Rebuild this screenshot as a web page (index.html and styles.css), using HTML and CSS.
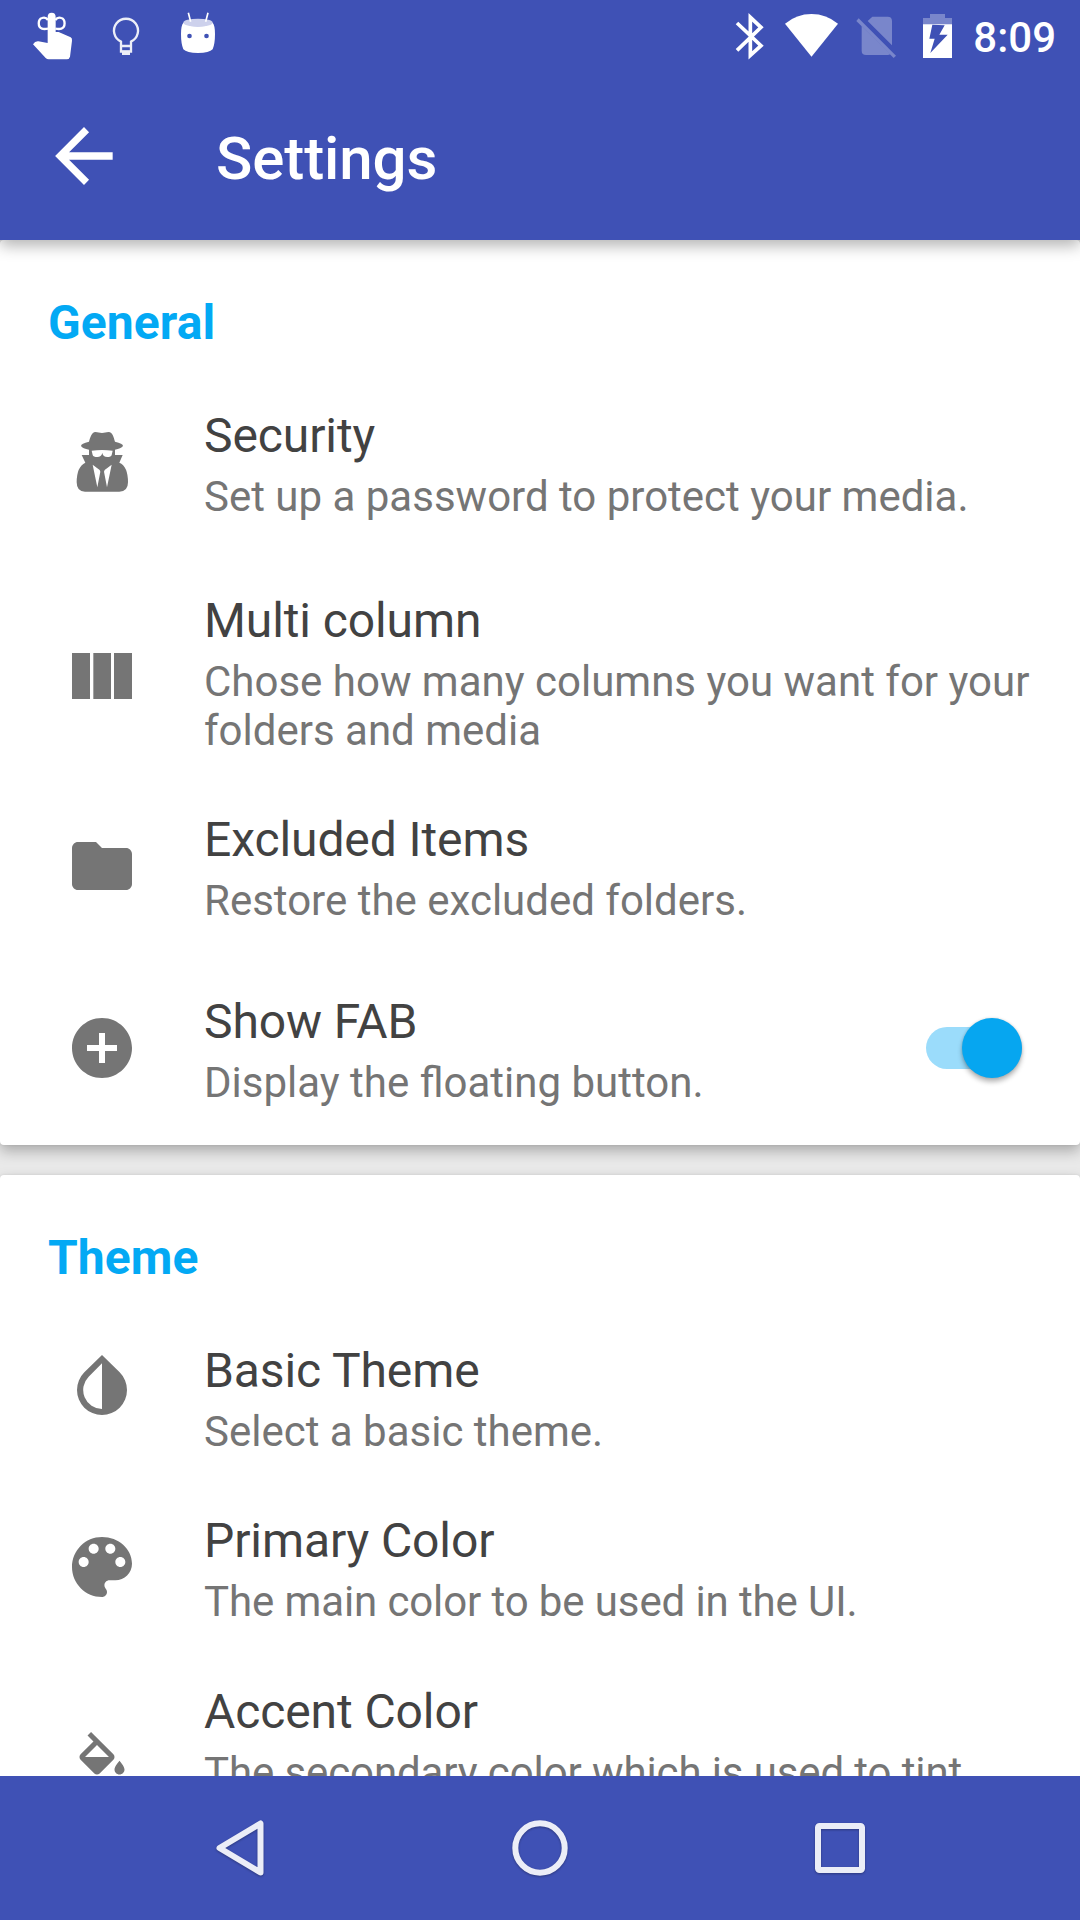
FILE: index.html
```html
<!DOCTYPE html>
<html lang="en">
<head>
<meta charset="utf-8">
<title>Settings</title>
<link rel="stylesheet" href="styles.css">
</head>
<body>
<div class="screen">
  <header class="app-header">
    <div class="status-bar">
      <div class="notifications">
        <svg width="42" height="72" viewBox="96 0 126 216" fill="#fff"><path d="M143 51q0-13 12-13t12 13v45h9l36 16q5 3 4 10l-6 48q-2 8-10 8h-54q-5 0-9-4L99 133q6-10 16-9l28 5z"/><g fill="none" stroke="#fff" stroke-width="7"><path d="M144 60c-4-6-12-8-18-6-13 4-13 28 0 32 6 2 12 1 18 0M166 60c4-6 12-8 18-6 13 4 13 28 0 32-6 2-12 1-18 0"/></g></svg>
        <svg width="32" height="72" viewBox="333 0 96 216"><g opacity=".9"><path d="M363 158v-33a36 36 0 1 1 30 0v33M363 138h30M363 154h30" fill="none" stroke="#fff" stroke-width="7"/><path d="M366 152h24v13h-24z" fill="#fff"/></g></svg>
        <svg width="36" height="72" viewBox="540 0 108 216"><path d="M550 68q44 22 88 0 7 8 7 34 0 29-7 46-10 11-44 11t-44-11q-7-17-7-46 0-26 7-34z" fill="#fff"/><ellipse cx="594" cy="68" rx="44" ry="12" fill="#cdd1ec"/><path d="M565 38l7 27M624 38l-7 27" stroke="#fff" stroke-width="5"/><circle cx="568.500" cy="108" r="7" fill="#3f51b5"/><circle cx="619.500" cy="108" r="7" fill="#3f51b5"/></svg>
      </div>
      <div class="indicators">
        <svg width="29" height="72" viewBox="45 0 87 216"><path d="M51 69l72 68-32 29V52l32 30-72 69" fill="none" stroke="#fff" stroke-width="11"/></svg>
        <svg width="55" height="72" viewBox="192 0 165 216"><path d="M195 71q35-29 79.500-29T354 71l-79.500 99z" fill="#fff"/></svg>
        <svg width="41" height="72" viewBox="408 0 123 216" fill="#7986cb"><path d="M457 50h46q13 0 13 13v73l-73-73zM425 78l86 84q-3 3-8 3h-65q-13 0-13-13z"/><path d="M409 63l7-8 112 112-7 7z"/></svg>
        <svg width="31" height="72" viewBox="606 0 93 216"><path d="M630 42h45v12h21v20h-87V54h21z" fill="#7986cb"/><path d="M609 73h87v101h-87zM637 74l-9 42h16l-13 43 52-55h-25l16-28z" fill="#fff" fill-rule="evenodd"/></svg>
        <span class="clock">8:09</span>
      </div>
    </div>
    <div class="toolbar">
      <svg class="back" width="86" height="86" viewBox="0 0 24 24" fill="#fff"><path d="M20 10.940H7.830l5.590-5.590L12 3.940 3.940 12 12 20.060l1.410-1.410L7.830 13.060H20z"/></svg>
      <h1 class="toolbar-title">Settings</h1>
    </div>
  </header>

  <main class="content">
    <section class="card general">
      <h2 class="card-title">General</h2>
      <div class="row">
        <svg class="icon icon-security" viewBox="78 438 216 216"><path d="M186 459c8 0 12-3 20-3 12 0 15 16 19 29q24 5 24 13-6 8-24 11v16h23l-10 23q26 11 26 59 0 28-26 28h-103q-25 0-25-28 0-47 26-59l-11-23h22v-16q-19-3-24-11 0-8 24-13c4-13 8-29 19-29 8 0 12 3 20 3z"/><path fill="#fff" d="M155 512q31-4 63 0l-3 13q-2 6-13 6-13 0-15-12-3 12-15 12-12 0-14-6zM158 554l21 16 2 5-9 47q-7-34-14-68zM215 554l-21 16-2 5 9 47q7-34 14-68z"/></svg>
        <div class="text"><div class="title">Security</div><div class="summary">Set up a password to protect your media.</div></div>
      </div>
      <div class="row row-columns">
        <svg class="icon icon-columns" viewBox="78 180 216 216"><path d="M96 219h54v138H96zM160 219h53v138h-53zM222 219h54v138h-54z"/></svg>
        <div class="text"><div class="title">Multi column</div><div class="summary">Chose how many columns you want for your folders and media</div></div>
      </div>
      <div class="row row-excluded">
        <svg class="icon icon-folder" viewBox="0 0 24 24"><path d="M10 4H4c-1.100 0-1.990.9-1.990 2L2 18c0 1.100.9 2 2 2h16c1.100 0 2-.9 2-2V8c0-1.100-.9-2-2-2h-8l-2-2z"/></svg>
        <div class="text"><div class="title">Excluded Items</div><div class="summary">Restore the excluded folders.</div></div>
      </div>
      <div class="row row-fab">
        <svg class="icon icon-add" viewBox="0 0 24 24"><path d="M12 2C6.480 2 2 6.480 2 12s4.480 10 10 10 10-4.480 10-10S17.520 2 12 2zm5 11h-4v4h-2v-4H7v-2h4V7h2v4h4v2z"/></svg>
        <div class="text"><div class="title">Show FAB</div><div class="summary">Display the floating button.</div></div>
        <div class="switch"><div class="thumb"></div></div>
      </div>
    </section>

    <section class="card theme">
      <h2 class="card-title">Theme</h2>
      <div class="row">
        <svg class="icon icon-invert" viewBox="78 57 216 216"><path fill-rule="evenodd" d="M186 75l53 52a75 75 0 1 1-106 0zM186 100l-40 40a57 57 0 0 0 40 97z"/></svg>
        <div class="text"><div class="title">Basic Theme</div><div class="summary">Select a basic theme.</div></div>
      </div>
      <div class="row">
        <svg class="icon icon-palette" viewBox="1.2 1.2 21.6 21.6"><path d="M12 3c-4.970 0-9 4.030-9 9s4.030 9 9 9c.83 0 1.500-.67 1.500-1.500 0-.39-.15-.74-.39-1.010-.23-.26-.38-.61-.38-.99 0-.83.67-1.500 1.500-1.500H16c2.760 0 5-2.240 5-5 0-4.420-4.030-8-9-8zm-5.500 9c-.83 0-1.500-.67-1.500-1.500S5.670 9 6.500 9 8 9.670 8 10.500 7.330 12 6.500 12zm3-4C8.670 8 8 7.330 8 6.500S8.670 5 9.500 5s1.500.67 1.500 1.500S10.330 8 9.500 8zm5 0c-.83 0-1.500-.67-1.500-1.500S13.670 5 14.500 5s1.500.67 1.500 1.500S15.330 8 14.500 8zm3 4c-.83 0-1.500-.67-1.500-1.500S16.670 9 17.500 9s1.500.67 1.500 1.500-.67 1.500-1.500 1.500z"/></svg>
        <div class="text"><div class="title">Primary Color</div><div class="summary summary-tight">The main color to be used in the UI.</div></div>
      </div>
      <div class="row">
        <svg class="icon icon-fill" viewBox="-2.4 -2.4 28.8 28.8"><path d="M16.560 8.940L7.620 0 6.210 1.410l2.380 2.380-5.150 5.150c-.59.59-.59 1.540 0 2.120l5.500 5.500c.29.29.68.44 1.060.44s.77-.15 1.060-.44l5.500-5.500c.59-.58.59-1.530 0-2.120zM5.210 10L10 5.210 14.790 10H5.210zM19 11.500s-2 2.170-2 3.500c0 1.100.9 2 2 2s2-.9 2-2c0-1.330-2-3.500-2-3.500zM0 20h24v4H0z"/></svg>
        <div class="text"><div class="title">Accent Color</div><div class="summary summary-tight">The secondary color which is used to tint</div></div>
      </div>
    </section>
  </main>

  <nav class="nav-bar">
    <svg class="nav-icon" viewBox="0 0 72 72"><path d="M56.500 11.500v49L15.500 36z"/></svg>
    <svg class="nav-icon" viewBox="0 0 72 72"><circle cx="36" cy="36" r="24.700"/></svg>
    <svg class="nav-icon" viewBox="0 0 72 72"><rect x="14" y="14" width="44" height="44" rx="1.500"/></svg>
  </nav>
</div>
</body>
</html>
```
FILE: styles.css
```css
* {
  box-sizing: border-box;
}

body {
  margin: 0;
  font-family: Roboto, "Noto Sans", sans-serif;
}

.screen {
  width: 1080px;
  height: 1920px;
  display: flex;
  flex-direction: column;
  overflow: hidden;
  background: #e9e9e9;
}

svg {
  display: block;
  flex: none;
}

.app-header {
  position: relative;
  z-index: 1;
  flex: none;
  height: 240px;
  background: #3f51b5;
  color: #fff;
  box-shadow: 0 6px 14px rgba(0, 0, 0, 0.29);
}

.status-bar {
  height: 72px;
  padding: 0 24px 0 32px;
  display: flex;
  justify-content: space-between;
}

.notifications {
  display: flex;
  gap: 37px;
}

.indicators {
  display: flex;
  gap: 20px;
}

.indicators svg + svg + svg {
  margin-left: -3px;
}

.indicators svg + svg + svg + svg {
  margin-left: 5px;
}

.clock {
  font-size: 42px;
  font-weight: 500;
  line-height: 49px;
  padding-top: 13px;
}

.toolbar {
  height: 168px;
  display: flex;
  align-items: center;
  padding-left: 41px;
  gap: 89px;
}

.toolbar-title {
  margin: 6px 0 0;
  font-size: 60px;
  font-weight: 500;
  line-height: 70px;
  letter-spacing: -0.1px;
}

.content {
  flex: 1;
  min-height: 0;
  overflow: hidden;
  display: flex;
  flex-direction: column;
  gap: 30px;
}

.card {
  flex: none;
  background: #fff;
  border-radius: 4px;
  box-shadow: 0 6px 14px rgba(0, 0, 0, 0.27), 0 0 3px rgba(0, 0, 0, 0.08);
}

.general {
  height: 905px;
  padding-top: 55px;
}

.theme {
  padding-top: 55px;
  padding-bottom: 54px;
}

.card-title {
  margin: 0 0 57px 48px;
  color: #03a9f4;
  font-size: 48px;
  font-weight: 700;
  line-height: 56px;
  letter-spacing: 0.1px;
}

.row {
  display: flex;
  align-items: center;
  padding: 0 48px 0 66px;
}

.theme .row + .row {
  margin-top: 57px;
}

.row-columns {
  margin-top: 72px;
}

.row-excluded {
  margin-top: 57px;
}

.row-fab {
  margin-top: 69px;
}

.icon {
  width: 72px;
  height: 72px;
  margin-right: 66px;
  fill: #757575;
}

.icon-security,
.icon-folder,
.icon-add,
.icon-palette {
  margin-bottom: 5px;
}

.icon-columns {
  margin-top: 4px;
}

.icon-invert {
  align-self: flex-start;
  margin-top: 6px;
}

.icon-fill {
  margin-top: 43px;
}

.text {
  flex: 1;
  min-width: 0;
}

.title {
  color: #424242;
  font-size: 48px;
  line-height: 56px;
  letter-spacing: -0.1px;
}

.summary {
  margin-top: 8px;
  color: #757575;
  font-size: 42px;
  line-height: 49px;
}

.summary-tight {
  letter-spacing: -0.11px;
}

.switch {
  width: 96px;
  height: 42px;
  margin: 0 10px 5px 0;
  border-radius: 21px;
  background: #9bdcfb;
  display: flex;
  justify-content: flex-end;
  align-items: center;
}

.thumb {
  width: 60px;
  height: 60px;
  flex: none;
  border-radius: 50%;
  background: #06a6f0;
  box-shadow: 0 4px 5px rgba(0, 0, 0, 0.28), 0 0 3px rgba(0, 0, 0, 0.15);
}

.nav-bar {
  flex: none;
  height: 144px;
  background: #3f51b5;
  display: flex;
  justify-content: center;
  align-items: center;
  gap: 228px;
}

.nav-icon {
  width: 72px;
  height: 72px;
  fill: none;
  stroke: #ebedf7;
  stroke-width: 6;
  stroke-linejoin: round;
  filter: drop-shadow(0 1px 1px rgba(0, 0, 0, 0.3));
}
```
